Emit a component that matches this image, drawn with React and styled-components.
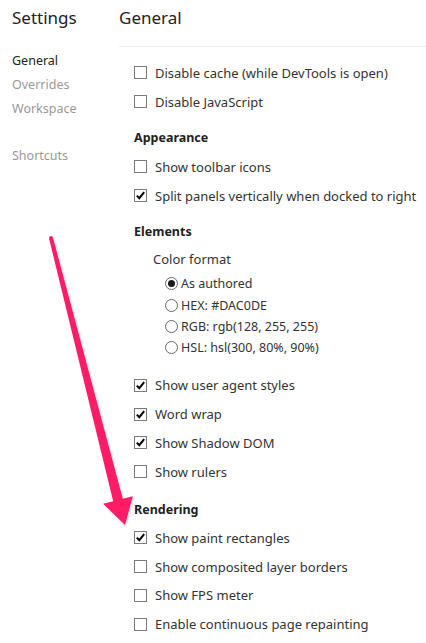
import React from "react";
import styled, { createGlobalStyle } from "styled-components";

const Global = createGlobalStyle`
  html, body { margin: 0; padding: 0; background: #fff; }
  body { font-family: "Noto Sans", "Open Sans", sans-serif; color: #333; }
  * { box-sizing: border-box; }
`;

const Page = styled.div`
  position: relative;
  width: 426px;
  height: 643px;
  display: grid;
  grid-template-columns: 119px 1fr;
  overflow: hidden;
`;

const Sidebar = styled.nav`
  display: flex;
  flex-direction: column;
  padding-left: 12px;
`;

const Title = styled.h1`
  margin: 0;
  height: 47px;
  padding-top: 4px;
  font-size: 17px;
  font-weight: 400;
  line-height: 28px;
  color: #222;
`;

const NavList = styled.ul`
  list-style: none;
  margin: 0;
  padding: 2px 0 0;
  display: flex;
  flex-direction: column;
`;

const NavItem = styled.li`
  height: 24px;
  line-height: 24px;
  font-size: 12.5px;
  color: ${(p) => (p.$active ? "#222" : "#999")};
  margin-top: ${(p) => (p.$gap ? "23px" : "0")};
`;

const Main = styled.main`
  display: flex;
  flex-direction: column;
`;

const MainHeader = styled.h1`
  margin: 0;
  height: 47px;
  padding-top: 4px;
  font-size: 17px;
  font-weight: 400;
  line-height: 28px;
  color: #222;
  border-bottom: 1px solid #eee;
`;

const Content = styled.div`
  display: flex;
  flex-direction: column;
  padding: 11.5px 0 0 15px;
`;

const Section = styled.section`
  display: flex;
  flex-direction: column;
  margin-top: ${(p) => p.$top || "7.5px"};
`;

const Heading = styled.h2`
  margin: 0;
  height: 28.8px;
  display: flex;
  align-items: center;
  font-size: 12.5px;
  font-weight: 700;
  color: #222;
`;

const Row = styled.label`
  height: 28.8px;
  display: flex;
  align-items: center;
  gap: 8px;
  font-size: 13px;
  color: #333;
  white-space: nowrap;
`;

const Box = styled.span`
  width: 13px;
  height: 13px;
  flex: none;
  border: 1px solid #7a7a7a;
  background: #fff;
  display: flex;
  align-items: center;
  justify-content: center;
`;

const SubLabel = styled.div`
  height: 26px;
  display: flex;
  align-items: center;
  padding-left: 19px;
  font-size: 13px;
  color: #333;
`;

const RadioGroup = styled.div`
  display: flex;
  flex-direction: column;
  padding-left: 31px;
  margin-top: 1px;
  margin-bottom: 12.5px;
`;

const RadioRow = styled.label`
  height: 21.3px;
  display: flex;
  align-items: center;
  gap: 3px;
  font-size: 12.5px;
  color: #333;
  white-space: nowrap;
`;

const Circle = styled.span`
  width: 13px;
  height: 13px;
  flex: none;
  border: 1px solid #666;
  border-radius: 50%;
  display: flex;
  align-items: center;
  justify-content: center;
  &::after {
    content: "";
    display: ${(p) => (p.$checked ? "block" : "none")};
    width: 7px;
    height: 7px;
    border-radius: 50%;
    background: #1a1a1a;
  }
`;

const ArrowLayer = styled.svg`
  position: absolute;
  left: 0;
  top: 0;
  pointer-events: none;
`;

function Check({ checked, children }) {
  return (
    <Row>
      <Box>
        {checked && (
          <svg width="11" height="11" viewBox="0 0 11 11">
            <path d="M1.8 5.6 L4.3 8.2 L9.2 2.2" fill="none" stroke="#000" strokeWidth="2" />
          </svg>
        )}
      </Box>
      {children}
    </Row>
  );
}

function Radio({ checked, children }) {
  return (
    <RadioRow>
      <Circle $checked={checked} />
      {children}
    </RadioRow>
  );
}

export default function App() {
  return (
    <>
      <Global />
      <Page>
        <Sidebar>
          <Title>Settings</Title>
          <NavList>
            <NavItem $active>General</NavItem>
            <NavItem>Overrides</NavItem>
            <NavItem>Workspace</NavItem>
            <NavItem $gap>Shortcuts</NavItem>
          </NavList>
        </Sidebar>
        <Main>
          <MainHeader>General</MainHeader>
          <Content>
            <Section $top="0">
              <Check>Disable cache (while DevTools is open)</Check>
              <Check>Disable JavaScript</Check>
            </Section>
            <Section>
              <Heading>Appearance</Heading>
              <Check>Show toolbar icons</Check>
              <Check checked>Split panels vertically when docked to right</Check>
            </Section>
            <Section>
              <Heading>Elements</Heading>
              <SubLabel>Color format</SubLabel>
              <RadioGroup>
                <Radio checked>As authored</Radio>
                <Radio>HEX: #DAC0DE</Radio>
                <Radio>RGB: rgb(128, 255, 255)</Radio>
                <Radio>HSL: hsl(300, 80%, 90%)</Radio>
              </RadioGroup>
              <Check checked>Show user agent styles</Check>
              <Check checked>Word wrap</Check>
              <Check checked>Show Shadow DOM</Check>
              <Check>Show rulers</Check>
            </Section>
            <Section $top="8.5px">
              <Heading>Rendering</Heading>
              <Check checked>Show paint rectangles</Check>
              <Check>Show composited layer borders</Check>
              <Check>Show FPS meter</Check>
              <Check>Enable continuous page repainting</Check>
            </Section>
          </Content>
        </Main>
        <ArrowLayer width="426" height="643" viewBox="0 0 426 643">
          <defs>
            <filter id="sh" x="-20%" y="-5%" width="140%" height="110%">
              <feDropShadow dx="1" dy="1" stdDeviation="1" floodColor="#000" floodOpacity="0.18" />
            </filter>
          </defs>
          <polygon
            filter="url(#sh)"
            fill="#fd1a66"
            points="49.1,238.5 52.9,237.5 122.8,498.8 132.8,496.2 125,525 103.2,503.8 113.2,501.2"
          />
          <circle cx="51" cy="238" r="1.95" fill="#fd1a66" />
        </ArrowLayer>
      </Page>
    </>
  );
}
